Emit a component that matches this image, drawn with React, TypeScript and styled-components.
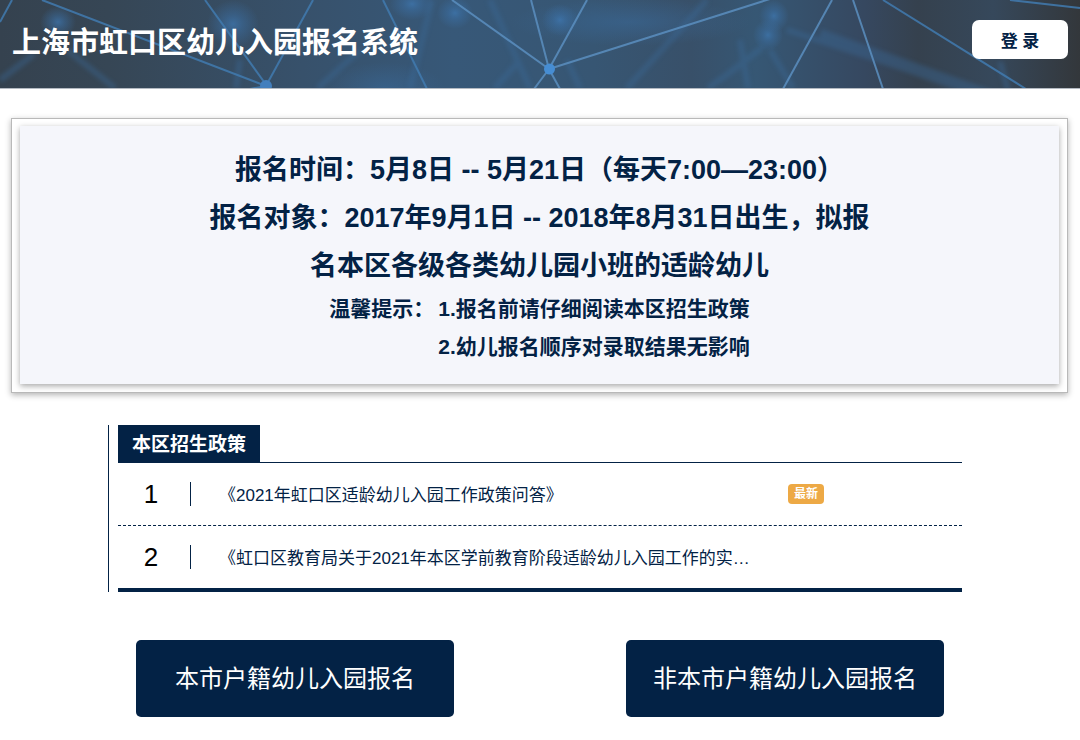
import React from "react";
import styled, { createGlobalStyle } from "styled-components";

const NAVY = "#032245";

const GlobalStyle = createGlobalStyle`
  * { box-sizing: border-box; }
  body {
    margin: 0;
    background: #fff;
    color: ${NAVY};
    font-family: "Liberation Sans", "Noto Sans CJK SC", sans-serif;
  }
`;

const Header = styled.header`
  position: relative;
  display: flex;
  align-items: center;
  justify-content: space-between;
  height: 89px;
  padding: 0 12px 10px;
  background: #374f67;
  overflow: hidden;
`;

const Backdrop = styled.svg`
  position: absolute;
  inset: 0;
  width: 100%;
  height: 100%;
`;

const SiteTitle = styled.h1`
  position: relative;
  margin: 0;
  padding-top: 6px;
  color: #fff;
  font-size: 29px;
  line-height: 40px;
  font-weight: 700;
`;

const LoginButton = styled.button`
  position: relative;
  min-width: 96px;
  height: 39px;
  padding: 0 24px;
  border: 0;
  border-radius: 7px;
  background: #fff;
  color: ${NAVY};
  font: inherit;
  font-size: 17px;
  font-weight: 700;
  cursor: pointer;
`;

const NoticeFrame = styled.section`
  margin: 29px 12px 0 11px;
  padding: 7px 8px 8px;
  border: 1px solid #b9b9b9;
  box-shadow: 0 2px 6px rgba(0, 0, 0, 0.3);
`;

const Notice = styled.div`
  display: flex;
  flex-direction: column;
  align-items: center;
  padding: 20px 24px 18px;
  background: #f5f6fb;
  box-shadow: 0 2px 6px rgba(0, 0, 0, 0.35);
  font-weight: 700;
`;

const NoticeText = styled.p`
  max-width: 680px;
  margin: 0;
  font-size: 27px;
  line-height: 48px;
  text-align: center;
`;

const Tips = styled.dl`
  display: flex;
  margin: 0;
  font-size: 21px;
  line-height: 38px;
`;

const TipLabel = styled.dt`
  margin-right: 4px;
`;

const TipList = styled.dd`
  margin: 0;
`;

const Tip = styled.div``;

const Policies = styled.section`
  margin: 32px 10% 0;
  padding: 0 10px 0 9px;
  border-left: 1px solid ${NAVY};
`;

const PolicyHead = styled.div`
  display: flex;
  border-bottom: 1px solid ${NAVY};
`;

const PolicyTitle = styled.h2`
  margin: 0;
  padding: 3px 14px 0;
  background: ${NAVY};
  color: #fff;
  font-size: 19px;
  line-height: 34px;
  font-weight: 700;
`;

const PolicyList = styled.ol`
  margin: 0;
  padding: 0;
  list-style: none;
  border-bottom: 4px solid ${NAVY};
`;

const PolicyRow = styled.li`
  display: flex;
  align-items: center;
  height: 62px;

  & + & {
    height: 63px;
    border-top: 1px dashed ${NAVY};
  }
`;

const PolicyNumber = styled.span`
  flex: none;
  width: 73px;
  padding-right: 6px;
  border-right: 1px solid ${NAVY};
  color: #000;
  font-size: 26px;
  line-height: 24px;
  text-align: center;
`;

const PolicyLink = styled.a`
  flex: 0 1 569px;
  min-width: 0;
  margin-left: 28px;
  padding-top: 4px;
  overflow: hidden;
  color: ${NAVY};
  font-size: 17px;
  line-height: 26px;
  text-decoration: none;
  text-overflow: ellipsis;
  white-space: nowrap;
`;

const NewBadge = styled.span`
  flex: none;
  padding: 0 6px;
  border-radius: 4px;
  background: #eda945;
  color: #fff;
  font-size: 12px;
  line-height: 20px;
  font-weight: 700;
`;

const Actions = styled.nav`
  display: flex;
  flex-wrap: wrap;
  justify-content: space-around;
  gap: 24px 0;
  margin: 48px 50px 24px;
`;

const ActionButton = styled.button`
  width: 318px;
  height: 77px;
  padding: 0 0 4px;
  border: 0;
  border-radius: 5px;
  background: ${NAVY};
  color: #fff;
  font: inherit;
  font-size: 24px;
  cursor: pointer;
`;

const policies = [
  { title: "《2021年虹口区适龄幼儿入园工作政策问答》", isNew: true },
  { title: "《虹口区教育局关于2021年本区学前教育阶段适龄幼儿入园工作的实…", isNew: false },
];

const glows = [
  { x: 58, y: 22, rx: 18, ry: 16 },
  { x: 233, y: 24, rx: 26, ry: 24 },
  { x: 412, y: 4, rx: 22, ry: 16 },
  { x: 455, y: 13, rx: 18, ry: 16 },
  { x: 560, y: 20, rx: 18, ry: 16 },
  { x: 768, y: 35, rx: 15, ry: 16 },
  { x: 774, y: 16, rx: 15, ry: 16 },
];

const bands = [
  "M67 50L115 88", "M0 80L34 54", "M240 60L236 88", "M318 88L360 50",
  "M432 0L410 88", "M490 0L530 88", "M495 88L520 60", "M567 60L580 88",
  "M707 0L627 88", "M720 80L763 47", "M770 50L793 88", "M740 40L748 88",
  "M708 88L722 78", "M787 30L970 90", "M1000 62L1008 90",
];

const strands = [
  "M12 0L0 22", "M42 0L266 86", "M205 0L267 86", "M313 0L267 84", "M250 89L266 86",
  "M383 0L427 89", "M883 0L1026 89", "M1010 0L1080 8",
];

const brightStrands = [
  "M452 0L549 69", "M531 0L549 69", "M587 0L549 69", "M773 -2L549 69",
  "M549 69L534 89", "M549 69L560 89", "M832 0L783 89", "M853 0L883 89",
];

function NetworkBackdrop() {
  return (
    <Backdrop viewBox="0 0 1080 89" preserveAspectRatio="xMidYMid slice" aria-hidden="true">
      <defs>
        <linearGradient id="base">
          <stop offset="0" stopColor="#35424f" />
          <stop offset="0.1" stopColor="#364655" />
          <stop offset="0.28" stopColor="#37516b" />
          <stop offset="0.42" stopColor="#375878" />
          <stop offset="0.55" stopColor="#375673" />
          <stop offset="0.64" stopColor="#385069" />
          <stop offset="0.7" stopColor="#365774" />
          <stop offset="0.8" stopColor="#364860" />
          <stop offset="0.85" stopColor="#35414e" />
          <stop offset="0.92" stopColor="#36485b" />
          <stop offset="1" stopColor="#33373b" />
        </linearGradient>
        <radialGradient id="glow">
          <stop offset="0" stopColor="#3f7ab5" stopOpacity="0.7" />
          <stop offset="0.4" stopColor="#3b71a8" stopOpacity="0.45" />
          <stop offset="1" stopColor="#3b71a8" stopOpacity="0" />
        </radialGradient>
        <radialGradient id="haze">
          <stop offset="0" stopColor="#3b71a8" stopOpacity="0.4" />
          <stop offset="1" stopColor="#3b71a8" stopOpacity="0" />
        </radialGradient>
        <filter id="soft" x="-5%" y="-50%" width="110%" height="200%">
          <feGaussianBlur stdDeviation="2" />
        </filter>
      </defs>
      <rect width="1080" height="89" fill="url(#base)" />
      <ellipse cx="385" cy="88" rx="60" ry="26" fill="url(#haze)" />
      <ellipse cx="630" cy="22" rx="120" ry="24" fill="url(#haze)" />
      <g filter="url(#soft)" stroke="#3a6a9a" strokeWidth="6" opacity="0.38">
        {bands.map((d) => <path key={d} d={d} />)}
        <path d="M820 35L990 96" strokeWidth="12" />
      </g>
      {glows.map((g) => (
        <ellipse key={g.x} cx={g.x} cy={g.y} rx={g.rx} ry={g.ry} fill="url(#glow)" />
      ))}
      <g stroke="#417bb0" strokeWidth="2" opacity="0.85">
        {strands.map((d) => <path key={d} d={d} />)}
      </g>
      <g stroke="#5b8fc0" strokeWidth="2" opacity="0.85">
        {brightStrands.map((d) => <path key={d} d={d} />)}
      </g>
      <circle cx="266" cy="86" r="6" fill="#437fbd" />
      <circle cx="549.5" cy="69" r="5.5" fill="#468dd3" />
      <path d="M0 88.5H1080" stroke="#b4bac2" />
    </Backdrop>
  );
}

export default function App() {
  return (
    <>
      <GlobalStyle />
      <Header>
        <NetworkBackdrop />
        <SiteTitle>上海市虹口区幼儿入园报名系统</SiteTitle>
        <LoginButton type="button">登 录</LoginButton>
      </Header>
      <main>
        <NoticeFrame>
          <Notice>
            <NoticeText>报名时间：5月8日 -- 5月21日（每天7:00—23:00）</NoticeText>
            <NoticeText>报名对象：2017年9月1日 -- 2018年8月31日出生，拟报名本区各级各类幼儿园小班的适龄幼儿</NoticeText>
            <Tips>
              <TipLabel>温馨提示：</TipLabel>
              <TipList>
                <Tip>1.报名前请仔细阅读本区招生政策</Tip>
                <Tip>2.幼儿报名顺序对录取结果无影响</Tip>
              </TipList>
            </Tips>
          </Notice>
        </NoticeFrame>
        <Policies>
          <PolicyHead>
            <PolicyTitle>本区招生政策</PolicyTitle>
          </PolicyHead>
          <PolicyList>
            {policies.map((policy, index) => (
              <PolicyRow key={policy.title}>
                <PolicyNumber>{index + 1}</PolicyNumber>
                <PolicyLink href="#">{policy.title}</PolicyLink>
                {policy.isNew && <NewBadge>最新</NewBadge>}
              </PolicyRow>
            ))}
          </PolicyList>
        </Policies>
        <Actions>
          <ActionButton type="button">本市户籍幼儿入园报名</ActionButton>
          <ActionButton type="button">非本市户籍幼儿入园报名</ActionButton>
        </Actions>
      </main>
    </>
  );
}
